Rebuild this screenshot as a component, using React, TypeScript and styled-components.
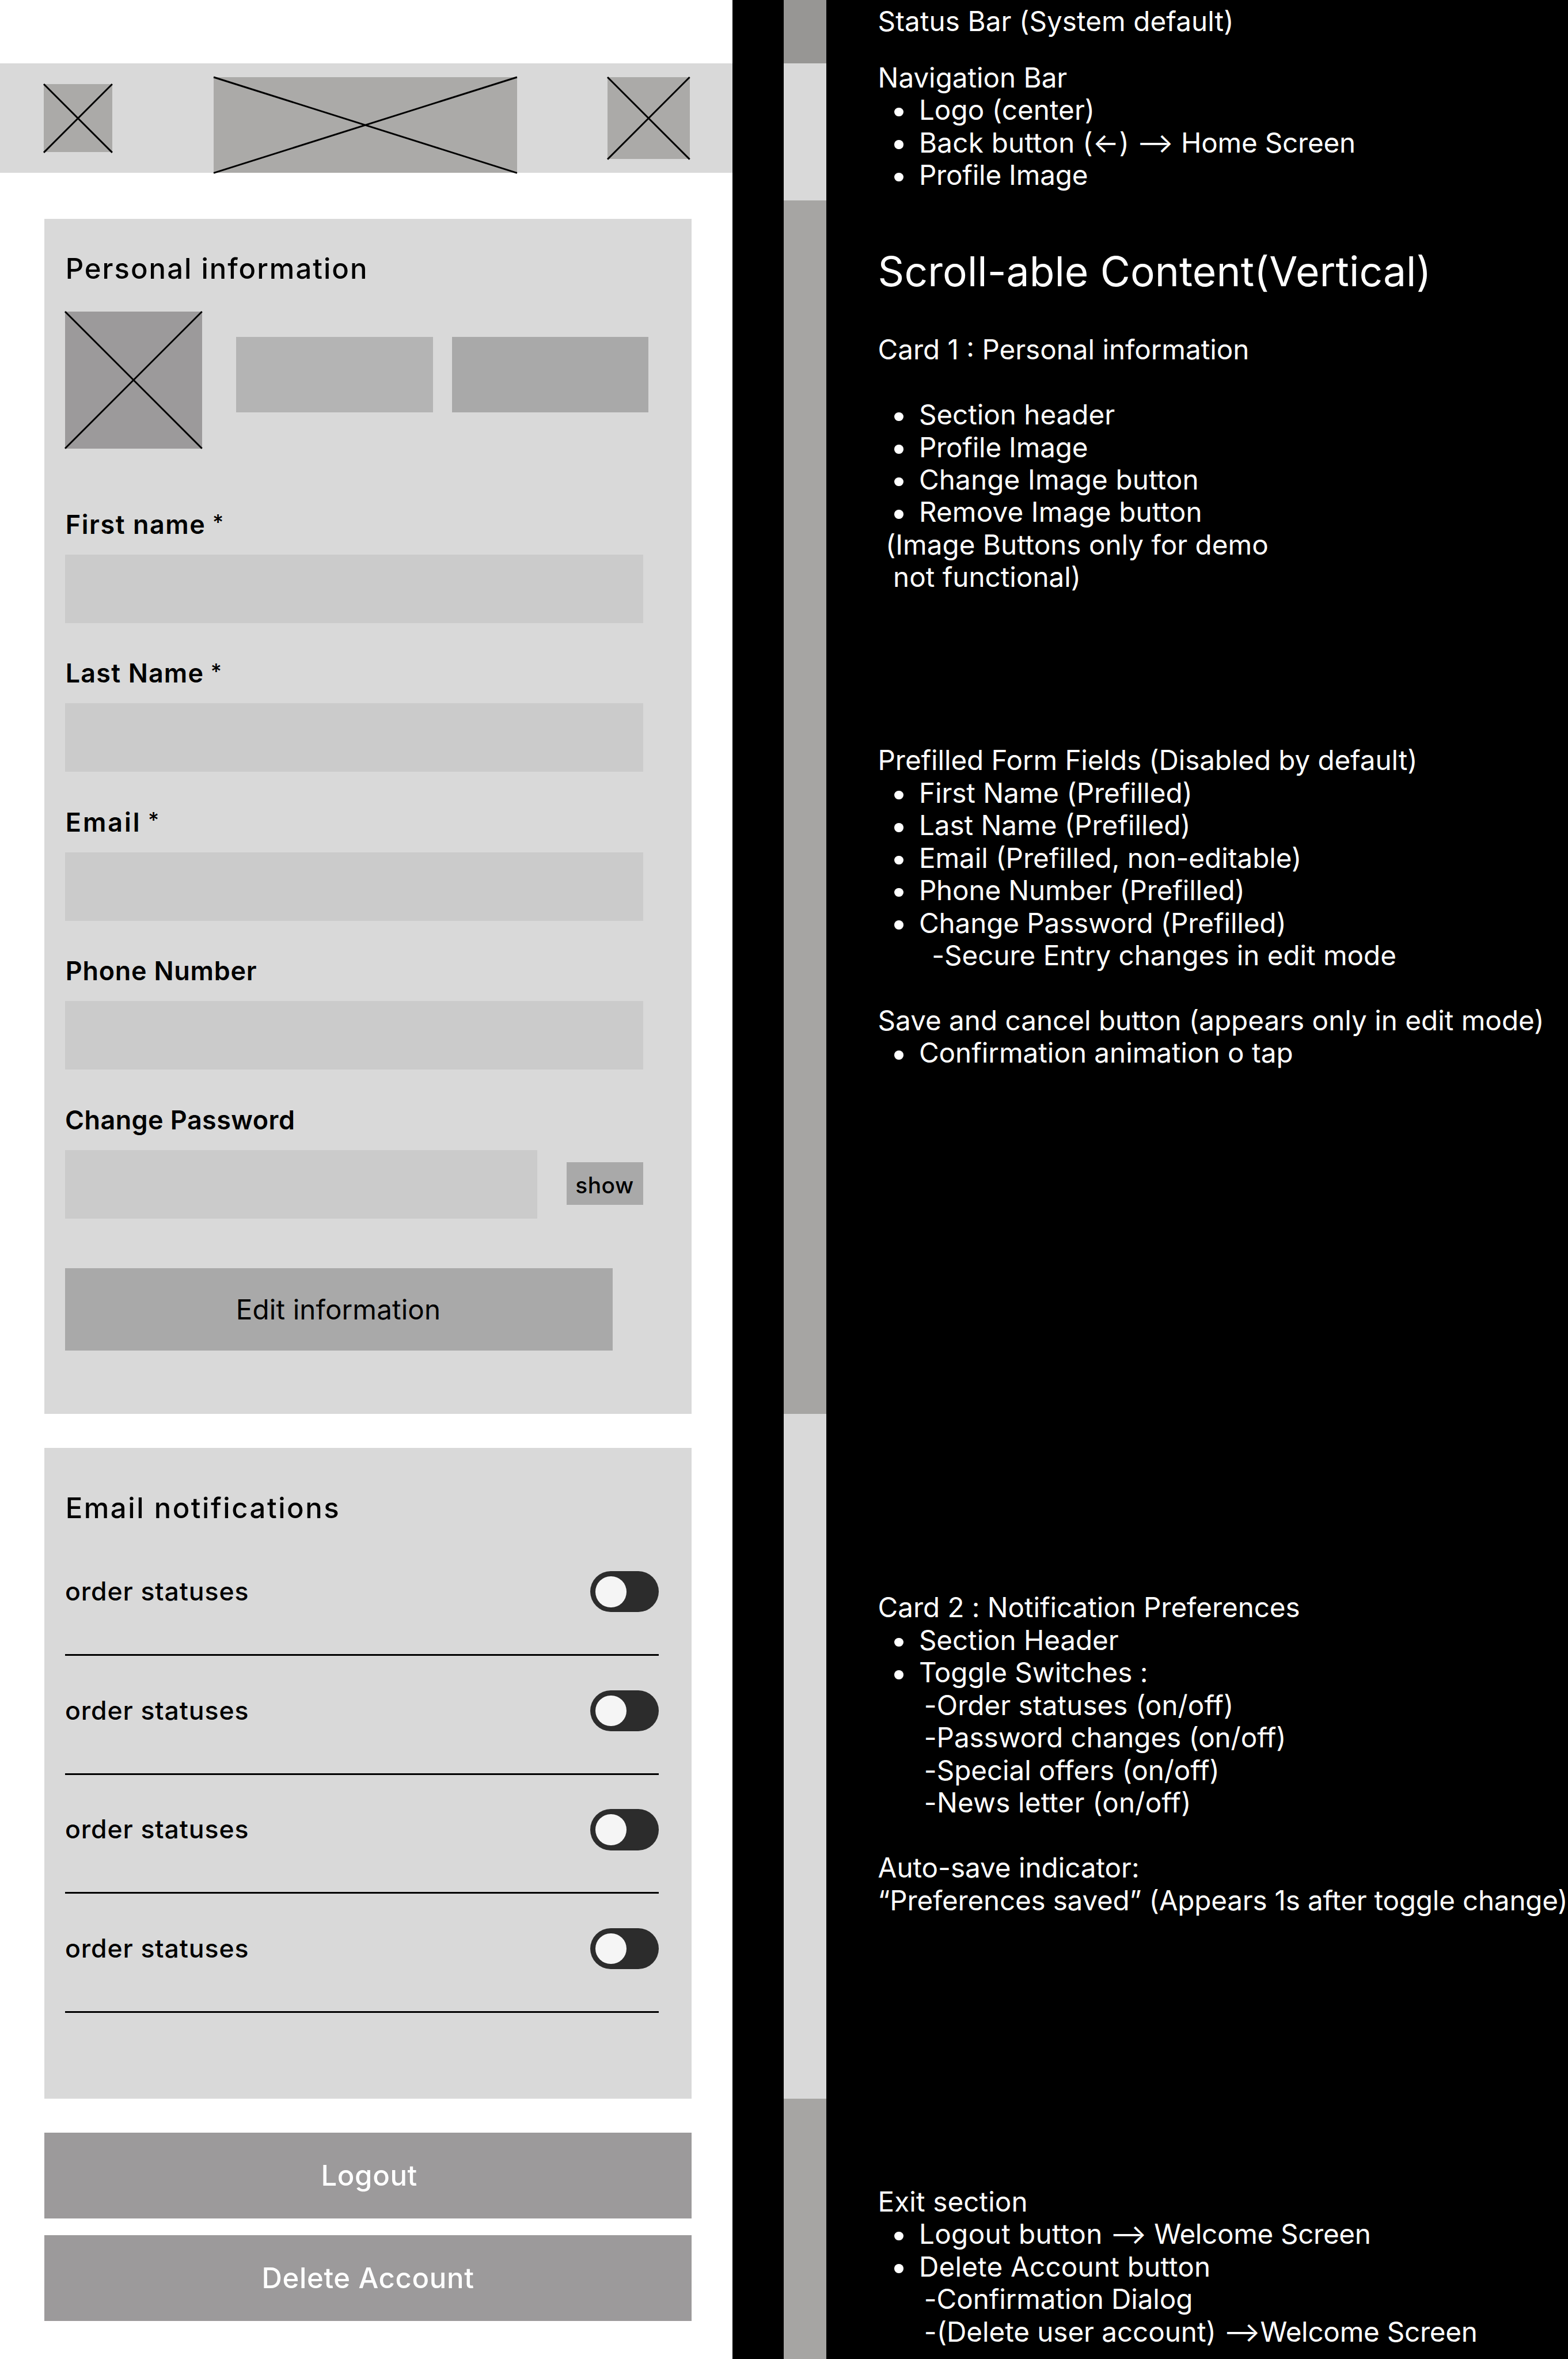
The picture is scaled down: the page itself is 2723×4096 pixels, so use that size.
import React from "react";
import styled, { createGlobalStyle } from "styled-components";

const UNIT = 2723 / 916.25;
const u = (n: number) => `${+(n * UNIT).toFixed(3)}px`;

const Global = createGlobalStyle`
  html, body { margin: 0; padding: 0; background: #000; }
  *, *::before, *::after { box-sizing: border-box; }
`;

const Board = styled.main`
  display: flex;
  width: 2723px;
  height: 4096px;
  overflow: hidden;
  background: #000;
  color: #000;
  font-family: Inter, "Liberation Sans", sans-serif;
`;

/* ---------- Phone frame ---------- */

const Phone = styled.section`
  display: flex;
  flex-direction: column;
  flex: none;
  width: ${u(428)};
  height: 100%;
  background: #fff;
`;

const StatusBar = styled.div`
  flex: none;
  height: ${u(37)};
`;

const NavBar = styled.header`
  display: flex;
  justify-content: space-between;
  align-items: flex-start;
  flex: none;
  height: ${u(64)};
  padding: ${u(8)} ${u(25)} 0 ${u(25.5)};
  background: #d9d9d9;
`;

const Placeholder = styled.svg<{ $w: number; $h: number; $fill: string; $top?: number; $left?: number }>`
  display: block;
  flex: none;
  overflow: visible;
  width: ${(p) => u(p.$w)};
  height: ${(p) => u(p.$h)};
  margin-top: ${(p) => u(p.$top ?? 0)};
  margin-left: ${(p) => u(p.$left ?? 0)};
  background: ${(p) => p.$fill};
  stroke: #000;
  stroke-width: 1;
`;

type CrossProps = { w: number; h: number; fill: string; top?: number; left?: number };

const Crossed = ({ w, h, fill, top, left }: CrossProps) => (
  <Placeholder $w={w} $h={h} $fill={fill} $top={top} $left={left} viewBox={`0 0 ${w} ${h}`}>
    <path d={`M0 0L${w} ${h}M0 ${h}L${w} 0`} fill="none" />
  </Placeholder>
);

const Card = styled.section<{ $h: number; $mt: number; $pt: number }>`
  display: flex;
  flex-direction: column;
  flex: none;
  width: ${u(378)};
  height: ${(p) => u(p.$h)};
  margin: ${(p) => u(p.$mt)} 0 0 ${u(26)};
  padding: ${(p) => u(p.$pt)} 0 0 ${u(12)};
  background: #d9d9d9;
`;

const CardTitle = styled.h2<{ $ls: number }>`
  flex: none;
  margin: 0;
  height: ${u(24)};
  font-size: ${u(16.5)};
  line-height: ${u(24.4)};
  font-weight: 500;
  letter-spacing: ${(p) => u(p.$ls)};
  text-indent: ${u(0.24)};
  white-space: nowrap;
`;

const PhotoRow = styled.div`
  display: flex;
  align-items: flex-start;
  flex: none;
  height: ${u(80)};
  margin-top: ${u(13)};
`;

const PhotoButton = styled.div<{ $bg: string; $ml: number }>`
  width: ${u(115)};
  height: ${u(44)};
  margin: ${u(15)} 0 0 ${(p) => u(p.$ml)};
  background: ${(p) => p.$bg};
`;

const Form = styled.form`
  display: flex;
  flex-direction: column;
  gap: ${u(20)};
  margin-top: ${u(35)};
`;

const Field = styled.div`
  display: flex;
  flex-direction: column;
  height: ${u(67)};
`;

const Label = styled.label<{ $ls: number; $indent?: number }>`
  height: ${u(27)};
  padding-left: ${(p) => u(p.$indent ?? 0.3)};
  font-size: ${u(15.1)};
  line-height: ${u(19.5)};
  font-weight: 600;
  letter-spacing: ${(p) => u(p.$ls)};
  white-space: pre;
`;

const Required = styled.span`
  margin-left: ${u(0.6)};
  font-size: ${u(12.4)};
  line-height: 0;
  font-weight: 500;
  letter-spacing: 0;
  vertical-align: ${u(2.1)};
`;

const InputRow = styled.div`
  display: flex;
  gap: ${u(17)};
  width: ${u(338)};
`;

const Input = styled.div`
  flex: 1;
  height: ${u(40)};
  background: #cbcbcb;
`;

const ShowButton = styled.div`
  display: flex;
  justify-content: center;
  align-items: center;
  width: ${u(45)};
  height: ${u(25)};
  margin-top: ${u(7)};
  padding: ${u(1.6)} ${u(0.4)} 0 0;
  background: #a9a9a9;
  font-size: ${u(13.1)};
  font-weight: 500;
  letter-spacing: ${u(0.15)};
`;

const EditButton = styled.div`
  display: flex;
  justify-content: center;
  align-items: center;
  flex: none;
  width: ${u(320)};
  height: ${u(48)};
  margin-top: ${u(29)};
  padding: ${u(0.4)} ${u(0.6)} 0 0;
  background: #a9a9a9;
  font-size: ${u(16)};
  line-height: ${u(19)};
  letter-spacing: ${u(0.05)};
`;

const ToggleList = styled.div`
  display: flex;
  flex-direction: column;
  margin-top: ${u(5)};
`;

const ToggleRow = styled.div`
  display: flex;
  justify-content: space-between;
  align-items: flex-start;
  flex: none;
  width: ${u(347)};
  height: ${u(69.5)};
  padding-top: ${u(20)};
  border-bottom: 3px solid #000;
`;

const ToggleLabel = styled.span`
  font-size: ${u(15)};
  line-height: ${u(23.6)};
  font-weight: 500;
  letter-spacing: ${u(0.3)};
`;

const Switch = styled.div`
  width: ${u(40)};
  height: ${u(24)};
  padding: ${u(3)};
  border-radius: ${u(12)};
  background: #2c2c2c;

  &::before {
    content: "";
    display: block;
    width: ${u(18)};
    height: ${u(18)};
    border-radius: 50%;
    background: #f5f5f5;
  }
`;

const ExitButton = styled.div<{ $mt: number; $pl?: number }>`
  display: flex;
  justify-content: center;
  align-items: center;
  flex: none;
  width: ${u(378)};
  height: ${u(50)};
  margin: ${(p) => u(p.$mt)} 0 0 ${u(26)};
  padding-top: ${u(0.2)};
  padding-left: ${(p) => u(p.$pl ?? 0)};
  background: #9c9a9b;
  color: #fff;
  font-size: ${u(16.5)};
  font-weight: 500;
  letter-spacing: ${u(0.23)};
`;

/* ---------- Section strip ---------- */

const Strip = styled.div`
  display: flex;
  flex-direction: column;
  flex: none;
  width: ${u(25)};
  margin-left: ${u(30)};
`;

const Segment = styled.div<{ $h: number; $bg: string }>`
  flex: none;
  height: ${(p) => u(p.$h)};
  background: ${(p) => p.$bg};
`;

/* ---------- Annotations ---------- */

const Notes = styled.aside`
  display: flex;
  flex-direction: column;
  flex: none;
  margin-left: ${u(30)};
  color: #fff;
  font-size: ${u(16)};
  line-height: ${u(19)};
  white-space: pre;
`;

const NoteBlock = styled.div<{ $mt: number; $h: number }>`
  flex: none;
  margin-top: ${(p) => u(p.$mt)};
  height: ${(p) => u(p.$h)};
`;

const NoteTitle = styled.h1`
  margin: 0;
  font-size: ${u(24)};
  line-height: ${u(29)};
  font-weight: 400;
  letter-spacing: ${u(0.035)};
`;

const Line = styled.div<{ $indent?: number; $ls?: number }>`
  height: ${u(19)};
  padding-left: ${(p) => u(p.$indent ?? 0)};
  letter-spacing: ${(p) => u(p.$ls ?? 0)};
`;

const Run = styled.span<{ $ls: number }>`
  letter-spacing: ${(p) => u(p.$ls)};
`;

const Bullet = styled.div<{ $ls?: number }>`
  display: flex;
  align-items: center;
  height: ${u(19)};
  letter-spacing: ${(p) => u(p.$ls ?? 0)};

  &::before {
    content: "";
    width: ${u(5.2)};
    height: ${u(5.2)};
    margin: ${u(2.2)} ${u(9.2)} 0 ${u(9.6)};
    border-radius: 50%;
    background: #fff;
  }
`;

const fields = [
  { label: "First name", required: true, ls: 0.53 },
  { label: "Last Name", required: true, ls: 0.4 },
  { label: "Email", required: true, ls: 1.0 },
  { label: "Phone Number", required: false, ls: 0.26 },
];

const toggles = ["order statuses", "order statuses", "order statuses", "order statuses"];

export default function App() {
  return (
    <Board>
      <Global />
      <Phone>
        <StatusBar />
        <NavBar>
          <Crossed w={40} h={40} fill="#abaaa8" top={4} />
          <Crossed w={177.3} h={56} fill="#abaaa8" left={6.8} />
          <Crossed w={48} h={48} fill="#abaaa8" />
        </NavBar>

        <Card $h={698} $mt={27} $pt={17}>
          <CardTitle $ls={0.68}>Personal information</CardTitle>
          <PhotoRow>
            <Crossed w={80} h={80} fill="#9c9a9b" />
            <PhotoButton $bg="#b4b4b4" $ml={20} />
            <PhotoButton $bg="#a9a9a9" $ml={11} />
          </PhotoRow>
          <Form>
            {fields.map((f) => (
              <Field key={f.label}>
                <Label $ls={f.ls}>
                  {f.label}
                  {f.required && <Required> *</Required>}
                </Label>
                <InputRow>
                  <Input />
                </InputRow>
              </Field>
            ))}
            <Field>
              <Label $ls={0.16} $indent={0}>Change Password</Label>
              <InputRow>
                <Input />
                <ShowButton>show</ShowButton>
              </InputRow>
            </Field>
          </Form>
          <EditButton>Edit information</EditButton>
        </Card>

        <Card $h={380} $mt={20} $pt={23}>
          <CardTitle $ls={0.86}>Email notifications</CardTitle>
          <ToggleList>
            {toggles.map((t, i) => (
              <ToggleRow key={i}>
                <ToggleLabel>{t}</ToggleLabel>
                <Switch />
              </ToggleRow>
            ))}
          </ToggleList>
        </Card>

        <ExitButton $mt={20} $pl={1.5}>Logout</ExitButton>
        <ExitButton $mt={10}>Delete Account</ExitButton>
      </Phone>

      <Strip>
        <Segment $h={37} $bg="#979694" />
        <Segment $h={80} $bg="#d9d9d9" />
        <Segment $h={709} $bg="#a6a5a3" />
        <Segment $h={400} $bg="#d9d9d9" />
        <Segment $h={153} $bg="#a6a5a3" />
      </Strip>

      <Notes>
        <NoteBlock $mt={2.9} $h={19}>
          <Line $ls={0.035}>Status Bar (System default)</Line>
        </NoteBlock>
        <NoteBlock $mt={14} $h={76}>
          <Line>Navigation Bar</Line>
          <Bullet $ls={0.03}>Logo (center)</Bullet>
          <Bullet>
            <Run $ls={0.09}>Back button (←)</Run>
            <Run $ls={-0.06}> ⟶ Home Screen</Run>
          </Bullet>
          <Bullet $ls={-0.062}>Profile Image</Bullet>
        </NoteBlock>
        <NoteBlock $mt={32} $h={29}>
          <NoteTitle>Scroll-able Content(Vertical)</NoteTitle>
        </NoteBlock>
        <NoteBlock $mt={22} $h={152}>
          <Line>Card 1 : Personal information</Line>
          <Line />
          <Bullet>Section header</Bullet>
          <Bullet $ls={-0.062}>Profile Image</Bullet>
          <Bullet $ls={0.06}>Change Image button</Bullet>
          <Bullet $ls={0.06}>Remove Image button</Bullet>
          <Line $indent={4.5} $ls={0.01}>(Image Buttons only for demo</Line>
          <Line $indent={8.9} $ls={0.01}>not functional)</Line>
        </NoteBlock>
        <NoteBlock $mt={88} $h={190}>
          <Line $ls={-0.025}>Prefilled Form Fields (Disabled by default)</Line>
          <Bullet $ls={-0.01}>First Name (Prefilled)</Bullet>
          <Bullet>Last Name (Prefilled)</Bullet>
          <Bullet>Email (Prefilled, non-editable)</Bullet>
          <Bullet $ls={-0.04}>Phone Number (Prefilled)</Bullet>
          <Bullet $ls={-0.03}>Change Password (Prefilled)</Bullet>
          <Line $indent={31.5} $ls={-0.005}>-Secure Entry changes in edit mode</Line>
          <Line />
          <Line $ls={0.01}>Save and cancel button (appears only in edit mode)</Line>
          <Bullet>Confirmation animation o tap</Bullet>
        </NoteBlock>
        <NoteBlock $mt={305} $h={190}>
          <Line $ls={-0.014}>Card 2 : Notification Preferences</Line>
          <Bullet $ls={-0.016}>Section Header</Bullet>
          <Bullet>Toggle Switches :</Bullet>
          <Line $indent={27} $ls={0.025}>-Order statuses (on/off)</Line>
          <Line $indent={27} $ls={-0.021}>-Password changes (on/off)</Line>
          <Line $indent={27} $ls={-0.009}>-Special offers (on/off)</Line>
          <Line $indent={27} $ls={0.072}>-News letter (on/off)</Line>
          <Line />
          <Line>Auto-save indicator:</Line>
          <Line $ls={-0.058}>“Preferences saved” (Appears 1s after toggle change)</Line>
        </NoteBlock>
        <NoteBlock $mt={157} $h={95}>
          <Line $ls={0.042}>Exit section</Line>
          <Bullet>
            <Run $ls={0.14}>Logout button</Run>
            <Run $ls={-0.1}> ⟶ Welcome Screen</Run>
          </Bullet>
          <Bullet $ls={0.08}>Delete Account button</Bullet>
          <Line $indent={27} $ls={-0.028}>-Confirmation Dialog</Line>
          <Line $indent={27}>
            <Run $ls={-0.009}>-(Delete user account)</Run>
            <Run $ls={-0.075}> ⟶Welcome Screen</Run>
          </Line>
        </NoteBlock>
      </Notes>
    </Board>
  );
}
